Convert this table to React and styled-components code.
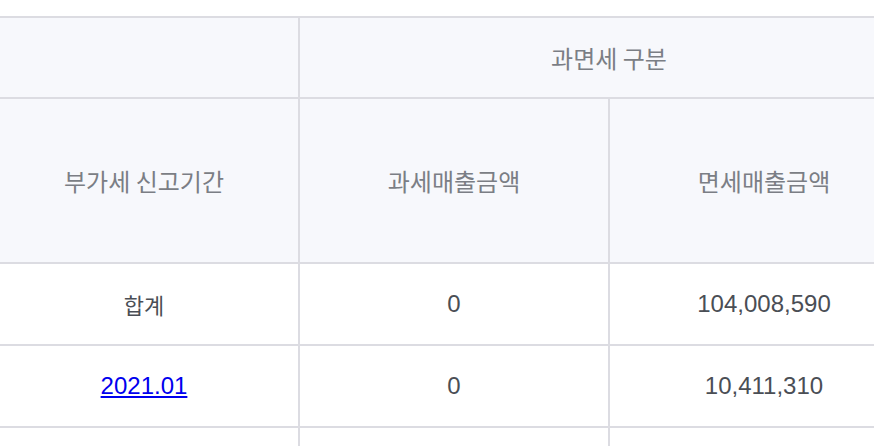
import styled, { createGlobalStyle } from "styled-components";

const GlobalStyle = createGlobalStyle`
  body {
    margin: 0;
    background: #ffffff;
    font-family: "Liberation Sans", "Noto Sans CJK KR", sans-serif;
  }
`;

const colors = {
  border: "#dcdce2",
  headBg: "#f7f8fc",
  headText: "#7b7e85",
  bodyText: "#4a4e55",
  link: "#0000ee",
};

const Wrapper = styled.div`
  padding-top: 16px;
  overflow: hidden;
  width: 874px;
  height: 446px;
`;

const Table = styled.table`
  border-collapse: collapse;
  margin-left: -12px;
  table-layout: fixed;
  width: 930px;
`;

const HeadCell = styled.th`
  background: ${colors.headBg};
  border: 2px solid ${colors.border};
  color: ${colors.headText};
  font-family: "Noto Sans CJK KR", "Liberation Sans", sans-serif;
  font-size: 24px;
  font-weight: 400;
  height: ${(p) => p.$h}px;
  padding: 0;
  text-align: center;
  vertical-align: middle;
`;

const Cell = styled.td`
  border: 2px solid ${colors.border};
  color: ${colors.bodyText};
  font-size: 24px;
  height: 80px;
  padding: 0;
  text-align: center;
  vertical-align: middle;
`;

const KoLabel = styled.span`
  font-family: "Noto Sans CJK KR", sans-serif;
  font-size: 22px;
`;

const PeriodLink = styled.a`
  color: ${colors.link};
  text-decoration: underline;
`;

const rows = [
  { period: null, taxed: "0", free: "104,008,590" },
  { period: "2021.01", taxed: "0", free: "10,411,310" },
  { period: "", taxed: "", free: "" },
];

export default function App() {
  return (
    <>
      <GlobalStyle />
      <Wrapper>
        <Table>
          <colgroup>
            <col style={{ width: "310px" }} />
            <col style={{ width: "310px" }} />
            <col style={{ width: "310px" }} />
          </colgroup>
          <thead>
            <tr>
              <HeadCell $h={79} />
              <HeadCell $h={79} colSpan={2}>
                과면세 구분
              </HeadCell>
            </tr>
            <tr>
              <HeadCell $h={163}>부가세 신고기간</HeadCell>
              <HeadCell $h={163}>과세매출금액</HeadCell>
              <HeadCell $h={163}>면세매출금액</HeadCell>
            </tr>
          </thead>
          <tbody>
            {rows.map((r, i) => (
              <tr key={i}>
                <Cell>
                  {r.period === null ? (
                    <KoLabel>합계</KoLabel>
                  ) : r.period ? (
                    <PeriodLink href="#">{r.period}</PeriodLink>
                  ) : null}
                </Cell>
                <Cell>{r.taxed}</Cell>
                <Cell>{r.free}</Cell>
              </tr>
            ))}
          </tbody>
        </Table>
      </Wrapper>
    </>
  );
}
